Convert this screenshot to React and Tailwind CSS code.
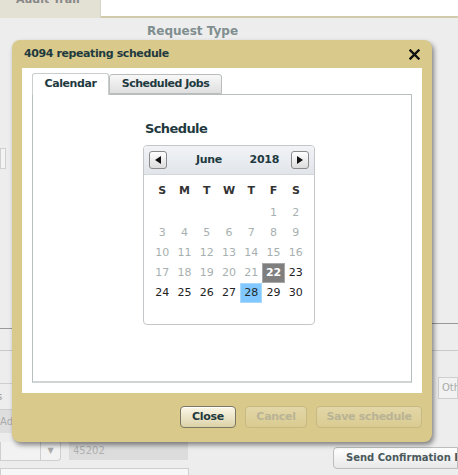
import React from "react";

const font = { fontFamily: '"DejaVu Sans", Verdana, sans-serif' };

const weeks = [
  [null, null, null, null, null, 1, 2],
  [3, 4, 5, 6, 7, 8, 9],
  [10, 11, 12, 13, 14, 15, 16],
  [17, 18, 19, 20, 21, 22, 23],
  [24, 25, 26, 27, 28, 29, 30],
];

function Day({ d }) {
  if (d === null) return <div className="h-5" />;
  if (d === 22)
    return (
      <div className="h-5 flex items-center justify-center bg-[#7f7f7f] border border-[#a8a8a8] text-white font-bold">
        {d}
      </div>
    );
  if (d === 28)
    return (
      <div className="h-5 flex items-center justify-center bg-[#80c8ff] border border-[#a9d8fb] text-[#1d2a2a]">
        {d}
      </div>
    );
  return (
    <div className={`h-5 flex items-center justify-center ${d < 22 ? "text-[#a7b0b0]" : "text-[#222]"}`}>
      {d}
    </div>
  );
}

function ArrowBtn({ dir }) {
  return (
    <div className="w-[18px] h-[18px] rounded-[3px] border border-[#8a8a8a] bg-gradient-to-b from-white to-[#dcdcdc] flex items-center justify-center">
      <svg width="6" height="8" viewBox="0 0 6 8">
        {dir === "left" ? <polygon points="6,0 6,8 0,4" fill="#111" /> : <polygon points="0,0 0,8 6,4" fill="#111" />}
      </svg>
    </div>
  );
}

function Calendar() {
  return (
    <div className="w-[172px] h-[180px] rounded-[4px] border border-[#c4c7c9] bg-white overflow-hidden">
      <div className="h-[29px] bg-gradient-to-b from-[#f1f3f6] to-[#e1e5ea] border-b border-[#d3d7dc] flex items-center px-[5px]">
        <ArrowBtn dir="left" />
        <div className="flex-1 flex justify-between pl-[29px] pr-[12px] text-[11px] font-bold text-[#1f3a3f] tracking-[-0.3px]">
          <span>June</span>
          <span>2018</span>
        </div>
        <ArrowBtn dir="right" />
      </div>
      <div className="px-[7px] pt-[4px] text-[11px]">
        <div className="grid grid-cols-7 font-bold text-[#333] h-[24px] items-center text-center">
          {["S", "M", "T", "W", "T", "F", "S"].map((x, i) => (
            <div key={i}>{x}</div>
          ))}
        </div>
        <div className="grid grid-cols-7 text-center">
          {weeks.flat().map((d, i) => (
            <Day key={i} d={d} />
          ))}
        </div>
      </div>
    </div>
  );
}

function Btn({ children, disabled, w }) {
  return (
    <div
      className={`${w} h-[22px] rounded-[4px] border flex items-center justify-center text-[11px] font-bold tracking-[-0.3px] ${
        disabled
          ? "border-[#c6b983] text-[#b9b396] bg-gradient-to-b from-[#e3d7a8] to-[#d9cb90]"
          : "border-[#7d7660] text-[#1f3a3f] bg-gradient-to-b from-[#fbf7e8] to-[#dcd2a8] shadow-[inset_0_1px_0_#fff]"
      }`}
    >
      {children}
    </div>
  );
}

export default function App() {
  return (
    <div className="relative w-[458px] h-[475px] overflow-hidden bg-[#ededed]" style={font}>
      {/* page behind */}
      <div className="flex h-[19px]">
        <div className="w-[101px] h-[18px] bg-[#e3e0d4] border-r border-[#d7d4c8] text-[11px] font-bold text-[#888] leading-none">
          <div className="-mt-[6px] pl-[16px]">Audit Trail</div>
        </div>
        <div className="flex-1 border-b-2 border-[#d2cbab] bg-white h-[18px]" />
      </div>
      <div className="pl-[147px] pt-[5px] h-[20px] text-[12px] leading-[15px] font-bold text-[#7f8e8f]">Request Type</div>
      <div className="mt-[109px] w-[6px] h-[21px] border border-[#d0d0d0] bg-[#f4f4f4]" />
      <div className="mt-[154px] flex justify-between items-start">
        <div className="mt-[5px] w-[14px] border-t border-[#999]" />
        <div className="w-[28px] border-t border-[#999]" />
      </div>
      <div className="mt-[21px] flex justify-between">
        <div className="w-[14px] border-t border-[#c9c9c9]" />
        <div className="w-[28px] border-t border-[#c9c9c9]" />
      </div>
      <div className="mt-[26px] flex justify-between items-start">
        <div className="mt-[6px] w-[14px] h-[27px] border-t border-b border-[#cfcfcf] text-[10px] text-[#999] leading-[25px]">
          <span className="-ml-[3px]">s</span>
        </div>
        <div className="w-[20px] h-[22px] border border-[#cfcfcf] bg-[#f2f2f2] text-[10px] text-[#aaa] leading-[20px] pl-[3px] overflow-hidden whitespace-nowrap">Oth</div>
      </div>
      <div className="w-[14px] h-[23px] bg-[#dedede] text-[10px] text-[#aaa] leading-[23px] overflow-hidden whitespace-nowrap">Ad</div>
      <div className="mt-[9px] flex items-start">
        <div className="w-[61px] h-[19px] border border-t-0 border-[#cfcfcf] rounded-br-[4px] bg-[#f2f2f2] flex justify-end">
          <div className="w-[20px] border-l border-[#cfcfcf] flex items-center justify-center text-[#aaa] text-[8px]">▼</div>
        </div>
        <div className="ml-[8px] w-[119px] h-[18px] bg-[#dcdcdc] text-[10px] text-[#b0b0b0] pl-[4px] leading-[18px]">45202</div>
        <div className="ml-auto mt-[5px] w-[125px] h-[22px] rounded-l-[4px] border border-[#bdbdbd] bg-gradient-to-b from-white to-[#e8e8e8] text-[10px] font-bold text-[#4a5a5c] pl-[12px] leading-[20px] whitespace-nowrap overflow-hidden">
          Send Confirmation Email
        </div>
      </div>
      <div className="flex items-start -mt-[1px]">
        <div className="w-[189px] h-[14px] border border-[#cfcfcf] bg-[#f7f7f7]" />
        <div className="ml-auto w-[123px] h-[6px] mt-[6px] text-[10px] text-[#999] whitespace-nowrap overflow-hidden leading-[12px]">Send email: 12, 24 hrs</div>
      </div>

      {/* dialog */}
      <div className="absolute left-[12px] top-[40px] w-[420px] h-[402px] rounded-[8px] bg-[#d9c98a] shadow-[2px_3px_5px_rgba(0,0,0,0.45)] flex flex-col px-[10px]">
        <div className="h-[28px] flex items-center justify-between pl-[2px] pr-[2px]">
          <span className="text-[11px] font-bold text-[#1f3a3f] tracking-[-0.4px]">4094 repeating schedule</span>
          <svg width="11" height="11" viewBox="0 0 11 11">
            <path d="M1.5 1.5 L9.5 9.5 M9.5 1.5 L1.5 9.5" stroke="#111" strokeWidth="2.4" strokeLinecap="square" />
          </svg>
        </div>
        <div className="h-[325px] bg-white px-[10px] pt-[4px] flex flex-col">
          <div className="flex items-end h-[22px]">
            <div className="w-[77px] h-[22px] border border-b-0 border-[#c9cdcd] rounded-t-[3px] bg-white text-[11px] font-bold text-[#1f3a3f] tracking-[-0.4px] flex items-center justify-center relative z-10 -mb-px">
              Calendar
            </div>
            <div className="w-[113px] h-[20px] border border-[#b8bcbc] rounded-t-[3px] bg-gradient-to-b from-[#f8f8f8] to-[#dfdfdf] text-[11px] font-bold text-[#1f3a3f] tracking-[-0.5px] flex items-center justify-center">
              Scheduled Jobs
            </div>
          </div>
          <div className="h-[289px] border border-[#b6bebe] border-b-2 border-b-[#cfd4d4] flex flex-col pl-[110px] pt-[27px]">
            <div className="text-[13px] font-bold text-[#1f3a3f] leading-none pl-[2px] tracking-[-0.6px]">Schedule</div>
            <div className="mt-[10px]">
              <Calendar />
            </div>
          </div>
        </div>
        <div className="flex justify-end items-center gap-[9px] mt-[13px]">
          <Btn w="w-[56px]">Close</Btn>
          <Btn w="w-[62px]" disabled>Cancel</Btn>
          <Btn w="w-[106px]" disabled>Save schedule</Btn>
        </div>
      </div>
    </div>
  );
}
